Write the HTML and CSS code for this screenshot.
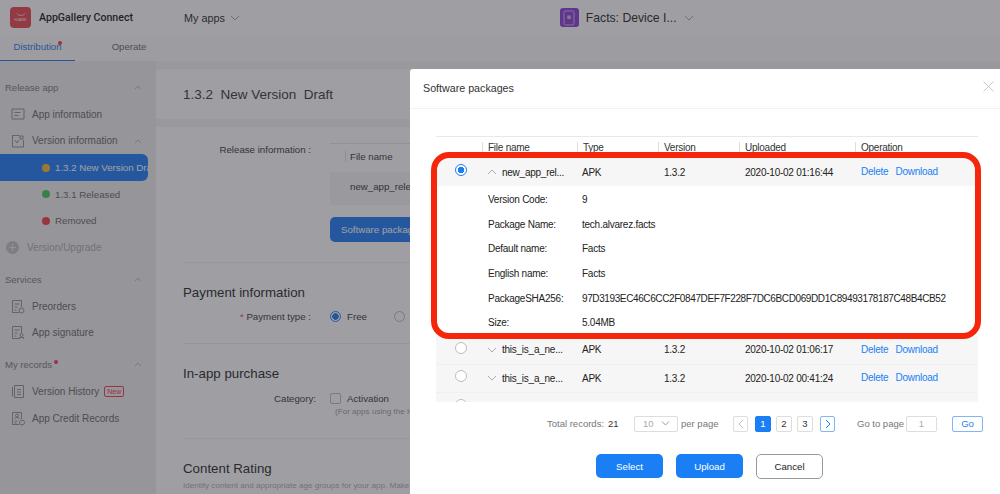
FILE: index.html
```html
<!DOCTYPE html>
<html lang="en">
<head>
    <meta charset="UTF-8">
    <meta name="viewport" content="width=device-width, initial-scale=1.0">
    <title>AppGallery Connect</title>
    <link rel="stylesheet" href="styles.css">
</head>
<body>
    <div class="page">
        <header class="topbar">
            <div class="logo">
                <svg width="14" height="5" viewBox="0 0 14 5"><path d="M3 0.5c1 2.5 7 2.5 8 0" fill="none" stroke="#fff" stroke-width="0.7"/></svg>
                <span class="logo-text">HUAWEI</span>
            </div>
            <span class="brand">AppGallery Connect</span>
            <span class="my-apps">My apps</span>
            <svg class="chev-top my-apps-chev" width="10" height="6" viewBox="0 0 10 6"><path d="M1 1l4 4 4-4"/></svg>
            <div class="app-icon">
                <svg width="12" height="16" viewBox="0 0 12 16"><rect x="1" y="1" width="10" height="14" rx="1.5" fill="none" stroke="#c9b6e6" stroke-width="1"/><rect x="4.2" y="5.5" width="3.6" height="3.6" fill="#c9b6e6"/></svg>
            </div>
            <span class="app-name">Facts: Device I...</span>
            <svg class="chev-top" width="10" height="6" viewBox="0 0 10 6"><path d="M1 1l4 4 4-4"/></svg>
        </header>

        <nav class="tabs">
            <a class="tab tab-active">Distribution<i class="dot"></i></a>
            <a class="tab">Operate</a>
        </nav>

        <div class="main">
            <aside class="sidebar">
                <div class="side-title">Release app <svg class="chev-side" width="8" height="5" viewBox="0 0 8 5"><path d="M1 4l3-3 3 3"/></svg></div>
                <div class="side-item">
                    <svg class="side-icon" width="14" height="14" viewBox="0 0 14 14"><path d="M1 2h12v10H1zM3.500 5.500h6M3.500 8.500h4"/></svg>
                    App information
                </div>
                <div class="side-item">
                    <svg class="side-icon" width="14" height="14" viewBox="0 0 14 14"><path d="M1.500 1.500h7M12.500 6v7h-11V1.500M4 6l2 3 2-3M9 2h3v3H9z"/></svg>
                    Version information
                    <svg class="chev-side" width="8" height="5" viewBox="0 0 8 5"><path d="M1 4l3-3 3 3"/></svg>
                </div>
                <div class="side-sub side-selected"><i class="status status-yellow"></i><span class="side-clip">1.3.2 New Version Draft</span></div>
                <div class="side-sub"><i class="status status-green"></i>1.3.1 Released</div>
                <div class="side-sub"><i class="status status-red"></i>Removed</div>
                <div class="side-item side-disabled">
                    <svg class="side-plus" width="13" height="13" viewBox="0 0 13 13"><circle cx="6.500" cy="6.500" r="6.500" fill="#bfbfc2"/><path d="M6.500 3v7M3 6.500h7" stroke="#e8e8e8" stroke-width="1"/></svg>
                    Version/Upgrade
                </div>

                <div class="side-title side-gap">Services <svg class="chev-side" width="8" height="5" viewBox="0 0 8 5"><path d="M1 4l3-3 3 3"/></svg></div>
                <div class="side-item">
                    <svg class="side-icon" width="14" height="15" viewBox="0 0 14 15"><path d="M8 13.500H1.500v-12h9V8M3.500 5h5M3.500 8h3M3.500 11h2"/><circle cx="10.500" cy="11.500" r="2.500"/></svg>
                    Preorders
                </div>
                <div class="side-item">
                    <svg class="side-icon" width="14" height="15" viewBox="0 0 14 15"><path d="M8 13.500H1.500v-12h9V8M3.500 5h5M3.500 8h3M3.500 11h2"/><circle cx="10.500" cy="10" r="1.500"/><path d="M8.500 14v-1.500h4V14"/></svg>
                    App signature
                </div>

                <div class="side-title side-gap">My records<i class="dot dot-side"></i> <svg class="chev-side" width="8" height="5" viewBox="0 0 8 5"><path d="M1 4l3-3 3 3"/></svg></div>
                <div class="side-item">
                    <svg class="side-icon" width="14" height="15" viewBox="0 0 14 15"><path d="M3.500 1.500h9v12h-9zM1.500 3v9.500M6 5.500h4M6 8h4M6 10.500h4"/></svg>
                    Version History
                    <span class="new-tag">New</span>
                </div>
                <div class="side-item">
                    <svg class="side-icon" width="14" height="15" viewBox="0 0 14 15"><path d="M8 13.500H1.500v-12h9V8M3.500 10h3M3.500 12h2"/><circle cx="6" cy="4.500" r="1.500"/><path d="M3.500 8c0-2 5-2 5 0"/><circle cx="11" cy="11.500" r="2.500"/></svg>
                    App Credit Records
                </div>
            </aside>

            <section class="content">
                <div class="version-bar">1.3.2&nbsp; New Version&nbsp; Draft</div>
                <div class="form">
                    <div class="release-row">
                        <div class="field-label">Release information :</div>
                        <div class="release-box">
                            <div class="release-head"><span>File name</span></div>
                            <div class="release-cell">new_app_release.apk</div>
                            <div class="btn-soft">Software package</div>
                        </div>
                    </div>
                    <div class="block">
                        <h2>Payment information</h2>
                        <div class="field">
                            <div class="field-label"><b class="req">*</b> Payment type :</div>
                            <i class="radio radio-on"></i><span class="field-val">Free</span>
                            <i class="radio radio-paid"></i>
                        </div>
                    </div>
                    <div class="block block-iap">
                        <h2>In-app purchase</h2>
                        <div class="field field-iap">
                            <div class="field-label">Category:</div>
                            <i class="checkbox"></i><span class="field-val">Activation</span>
                        </div>
                        <p class="hint">(For apps using the HUAWEI IAP service)</p>
                    </div>
                    <div class="block block-rating">
                        <h2>Content Rating</h2>
                        <p class="note">Identify content and appropriate age groups for your app. Make sure the rating is accurate.</p>
                    </div>
                </div>
            </section>
        </div>

        <div class="mask"></div>

        <div class="modal">
            <div class="modal-head">
                Software packages
                <svg class="modal-close" width="11" height="11" viewBox="0 0 11 11"><path d="M0.500 0.500l10 10M10.500 0.500l-10 10" stroke="#c8c8c8" stroke-width="1"/></svg>
            </div>

            <div class="pkg-wrap">
                <div class="pkg-row pkg-head">
                    <span></span><span>File name</span><span>Type</span><span>Version</span><span>Uploaded</span><span>Operation</span>
                </div>
                <div class="pkg-row pkg-item pkg-first">
                    <span class="cell-radio"><i class="radio-sm radio-sm-on"></i></span>
                    <span class="cell-name"><svg class="chev-row" width="10" height="6" viewBox="0 0 10 6"><path d="M1 5l4-4 4 4"/></svg>new_app_rel...</span>
                    <span>APK</span><span>1.3.2</span><span>2020-10-02 01:16:44</span>
                    <span class="ops"><a>Delete</a><a>Download</a></span>
                </div>
                <div class="detail-list">
                    <div class="detail"><span>Version Code:</span><span>9</span></div>
                    <div class="detail"><span>Package Name:</span><span>tech.alvarez.facts</span></div>
                    <div class="detail"><span>Default name:</span><span>Facts</span></div>
                    <div class="detail"><span>English name:</span><span>Facts</span></div>
                    <div class="detail"><span>PackageSHA256:</span><span class="sha">97D3193EC46C6CC2F0847DEF7F228F7DC6BCD069DD1C89493178187C48B4CB52</span></div>
                    <div class="detail"><span>Size:</span><span>5.04MB</span></div>
                </div>
                <div class="pkg-row pkg-item">
                    <span class="cell-radio"><i class="radio-sm"></i></span>
                    <span class="cell-name"><svg class="chev-row" width="10" height="6" viewBox="0 0 10 6"><path d="M1 1l4 4 4-4"/></svg>this_is_a_ne...</span>
                    <span>APK</span><span>1.3.2</span><span>2020-10-02 01:06:17</span>
                    <span class="ops"><a>Delete</a><a>Download</a></span>
                </div>
                <div class="pkg-row pkg-item">
                    <span class="cell-radio"><i class="radio-sm"></i></span>
                    <span class="cell-name"><svg class="chev-row" width="10" height="6" viewBox="0 0 10 6"><path d="M1 1l4 4 4-4"/></svg>this_is_a_ne...</span>
                    <span>APK</span><span>1.3.2</span><span>2020-10-02 00:41:24</span>
                    <span class="ops"><a>Delete</a><a>Download</a></span>
                </div>
                <div class="pkg-row pkg-item">
                    <span class="cell-radio"><i class="radio-sm"></i></span>
                </div>
            </div>

            <div class="pager">
                <span class="pager-label total-label">Total records:</span>
                <span class="pager-total">21</span>
                <div class="page-size">10
                    <svg width="9" height="5" viewBox="0 0 9 5"><path d="M1 0.500l3.500 3.500 3.500-3.500" fill="none" stroke="#9a9a9a"/></svg>
                </div>
                <span class="pager-label per-page">per page</span>
                <div class="page-arrow arrow-prev"><svg width="6" height="10" viewBox="0 0 6 10"><path d="M5 1L1 5l4 4" fill="none" stroke="#c4c4c4"/></svg></div>
                <div class="page-num page-on">1</div>
                <div class="page-num">2</div>
                <div class="page-num">3</div>
                <div class="page-arrow arrow-next"><svg width="6" height="10" viewBox="0 0 6 10"><path d="M1 1l4 4-4 4" fill="none" stroke="#1a7ff5"/></svg></div>
                <span class="pager-label goto">Go to page</span>
                <div class="goto-input">1</div>
                <div class="goto-btn">Go</div>
            </div>

            <div class="modal-foot">
                <button class="btn btn-primary">Select</button>
                <button class="btn btn-primary">Upload</button>
                <button class="btn btn-cancel">Cancel</button>
            </div>

            <div class="red-frame"></div>
        </div>
    </div>
</body>
</html>
```

FILE: styles.css
```css
* {
    box-sizing: border-box;
}
body {
    margin: 0;
    font-family: "Liberation Sans", Arial, sans-serif;
    color: #222;
}
.page {
    position: relative;
    width: 1000px;
    height: 494px;
    overflow: hidden;
    background: #f2f2f4;
    display: flex;
    flex-direction: column;
}

/* top bar */
.topbar {
    height: 35px;
    flex: none;
    background: #fff;
    display: flex;
    align-items: center;
    padding-left: 10px;
}
.logo {
    width: 21px;
    height: 21px;
    border-radius: 4px;
    background: #e8414d;
    display: flex;
    flex-direction: column;
    align-items: center;
    justify-content: center;
}
.logo svg {
    display: block;
}
.logo-text {
    font-size: 3px;
    line-height: 4px;
    color: #fff;
}
.brand {
    margin-left: 8px;
    width: 145px;
    font-size: 10.600px;
    color: #111;
    font-family: Roboto, "Liberation Sans", sans-serif;
    font-weight: 500;
}
.my-apps {
    font-size: 10.800px;
    color: #222;
}
.chev-top {
    fill: none;
    stroke: #aaa;
    margin-left: 5px;
}
.my-apps-chev {
    margin-right: 320px;
}
.app-icon {
    width: 19px;
    height: 19px;
    border-radius: 3px;
    background: #8638d8;
    display: flex;
    align-items: center;
    justify-content: center;
}
.app-name {
    margin-left: 7px;
    width: 93px;
    font-size: 12.200px;
    color: #222;
}

/* tabs */
.tabs {
    height: 26px;
    flex: none;
    background: #fbfbfb;
    display: flex;
}
.tab {
    position: relative;
    width: 75px;
    height: 26px;
    padding-top: 6px;
    font-size: 9.600px;
    text-align: center;
    color: #666;
}
.tab + .tab {
    margin-left: 10px;
    padding-left: 13px;
}
.tab-active {
    color: #1a73e8;
    border-bottom: 1px solid #1a73e8;
}
.dot {
    position: absolute;
    top: 6px;
    right: 13px;
    width: 4px;
    height: 4px;
    border-radius: 50%;
    background: #f0304a;
}

/* sidebar */
.main {
    flex: 1;
    display: flex;
    min-height: 0;
}
.sidebar {
    width: 156px;
    flex: none;
    padding-top: 13.300px;
    background: #ececef;
    font-size: 10px;
    color: #666;
}
.side-title,
.side-item,
.side-sub {
    position: relative;
    height: 26.670px;
    display: flex;
    align-items: center;
}
.side-title {
    padding-left: 5px;
    font-size: 9.500px;
    color: #777;
}
.side-gap {
    margin-top: 5.300px;
}
.side-item {
    padding-left: 32px;
}
.side-icon {
    position: absolute;
    left: 11px;
    fill: none;
    stroke: #777;
    stroke-width: 0.800;
}
.side-plus {
    position: absolute;
    left: 6px;
}
.chev-side {
    position: absolute;
    left: 134px;
    top: 11px;
    fill: none;
    stroke: #bbb;
}
.side-sub {
    padding-left: 55px;
    width: 148px;
    font-size: 9.700px;
}
.side-selected {
    background: #1a78f5;
    color: #fff;
    border-radius: 0 6px 6px 0;
    overflow: hidden;
    white-space: nowrap;
}
.side-clip {
    flex: none;
}
.status {
    position: absolute;
    left: 42px;
    top: 9.500px;
    width: 8px;
    height: 8px;
    border-radius: 50%;
}
.status-yellow {
    background: #f5b82e;
}
.status-green {
    background: #3cc95a;
}
.status-red {
    background: #f0384a;
}
.side-disabled {
    padding-left: 27px;
    color: #aaa;
}
.dot-side {
    position: static;
    margin: -6px 0 0 2px;
}
.new-tag {
    margin-left: 5px;
    height: 11px;
    width: 20px;
    border: 1px solid #f0384a;
    border-radius: 2px;
    font-size: 7px;
    line-height: 9px;
    text-align: center;
    color: #f0384a;
}

/* page content behind the dialog */
.content {
    flex: 1;
    min-width: 0;
    overflow: hidden;
}
.version-bar {
    height: 50px;
    margin-top: 8px;
    padding: 0 27px;
    background: #fff;
    font-size: 13.500px;
    line-height: 52px;
    color: #333;
    border-radius: 4px 0 0 0;
    white-space: nowrap;
}
.form {
    margin-top: 8px;
    height: 400px;
    background: #fff;
    padding: 0 27px;
}
.release-row {
    display: flex;
    height: 136px;
    padding-top: 17px;
    border-bottom: 1px solid #eee;
    width: 600px;
}
.field-label {
    width: 128px;
    margin-right: 19px;
    flex: none;
    text-align: right;
    font-size: 9.700px;
    color: #333;
}
.release-box {
    width: 300px;
    margin-top: -1px;
}
.release-head {
    height: 29px;
    border-top: 1px solid #e6e6e6;
    padding: 7px 0 0 15px;
    font-size: 9.700px;
    color: #333;
}
.release-head span {
    border-left: 1px solid #ddd;
    padding-left: 4px;
}
.release-cell {
    height: 33px;
    padding: 8px 20px;
    background: #f5f5f5;
    font-size: 9.700px;
    line-height: 14px;
    color: #333;
}
.btn-soft {
    margin-top: 12px;
    height: 25px;
    width: 120px;
    padding-left: 11px;
    border-radius: 5px;
    background: #1a78f5;
    color: #fff;
    font-size: 9.700px;
    line-height: 25px;
}
.block {
    width: 600px;
    border-bottom: 1px solid #eee;
    height: 81px;
    padding-top: 21px;
}
.block-iap {
    height: 95px;
}
.block-rating {
    border-bottom: 0;
}
.block h2 {
    margin: 0;
    font-size: 13.300px;
    line-height: 17px;
    font-weight: normal;
    color: #222;
}
.field {
    margin-top: 7px;
    height: 16px;
    display: flex;
    align-items: center;
    font-size: 9.700px;
    color: #333;
}
.field-iap {
    margin-top: 8px;
}
.field-iap .field-label {
    width: 133px;
    margin-right: 14px;
}
.req {
    color: #f0384a;
    font-weight: normal;
}
.field-val {
    margin-left: 6px;
}
.radio {
    width: 11px;
    height: 11px;
    border-radius: 50%;
    border: 1px solid #bbb;
    flex: none;
}
.radio-on {
    border: 1px solid #1a78f5;
    background: radial-gradient(circle, #1a78f5 0 3px, #fff 3.500px);
}
.radio-paid {
    margin-left: 27px;
}
.checkbox {
    width: 11px;
    height: 11px;
    border: 1px solid #bbb;
    border-radius: 2px;
    flex: none;
}
.hint {
    margin: 1px 0 0 152px;
    font-size: 8.100px;
    color: #999;
    white-space: nowrap;
}
.note {
    margin: 4px 0 0;
    font-size: 8.100px;
    color: #aaa;
    white-space: nowrap;
}

/* dim layer and dialog */
.mask {
    position: absolute;
    inset: 0;
    background: rgba(50, 52, 60, 0.47);
}
.modal {
    position: absolute;
    left: 410px;
    top: 69px;
    width: 590px;
    height: 425px;
    background: #fff;
    border-radius: 3px 0 0 0;
}
.modal-head {
    position: relative;
    height: 40px;
    padding-left: 13px;
    border-bottom: 1px solid #f2f2f2;
    font-size: 10.700px;
    line-height: 39px;
    color: #333;
}
.modal-close {
    position: absolute;
    right: 6px;
    top: 12px;
}
.pkg-wrap {
    margin: 27px 0 0 26px;
    width: 542px;
    height: 266px;
    overflow: hidden;
    border-top: 1px solid #e8e8e8;
    font-size: 10px;
    letter-spacing: -0.25px;
}
.pkg-row {
    display: grid;
    grid-template-columns: 46px 95px 81px 81px 116px 123px;
    align-items: center;
}
.pkg-row > span {
    padding-left: 5px;
    white-space: nowrap;
}
.pkg-item > span:nth-child(n+4) {
    padding-left: 6px;
}
.pkg-head {
    height: 21px;
    color: #333;
}
.pkg-head > span + span {
    border-left: 1px solid #ddd;
    line-height: 12px;
}
.pkg-item {
    height: 28.500px;
    background: #f6f6f6;
    border-bottom: 1px solid #f0f0f0;
    color: #222;
}
.pkg-first {
    height: 28px;
    border-bottom: 0;
}
.pkg-row > .cell-radio {
    padding: 0 0 4px 19px;
    display: flex;
}
.cell-name {
    display: flex;
    align-items: center;
}
.chev-row {
    margin-right: 5px;
    flex: none;
    fill: none;
    stroke: #aaa;
}
.ops {
    display: flex;
    gap: 7px;
    color: #1a7ff5;
    margin-bottom: 1px;
}
.radio-sm {
    width: 12px;
    height: 12px;
    border-radius: 50%;
    border: 1px solid #bdbdbd;
    background: #fff;
}
.radio-sm-on {
    border-color: #1a7ff5;
    background: radial-gradient(circle, #1a7ff5 0 3px, #fff 3.500px);
}
.detail-list {
    padding-top: 1px;
    height: 150px;
}
.detail {
    display: flex;
    height: 24.700px;
    align-items: center;
    white-space: nowrap;
    color: #222;
}
.detail span:first-child {
    width: 146px;
    padding-left: 52px;
    flex: none;
}
.detail .sha {
    letter-spacing: -0.39px;
}
.pager {
    margin-top: 14px;
    height: 15px;
    display: flex;
    align-items: center;
    font-size: 9.500px;
    padding-left: 137px;
}
.pager-label {
    color: #777;
}
.total-label {
    width: 61px;
    white-space: nowrap;
}
.pager-total {
    width: 26px;
    color: #333;
}
.page-size {
    width: 44px;
    height: 16px;
    border: 1px solid #ddd;
    border-radius: 2px;
    padding-left: 8px;
    display: flex;
    align-items: center;
    justify-content: space-between;
    padding-right: 7px;
    color: #aaa;
}
.per-page {
    margin-left: 3px;
    width: 52px;
}
.page-arrow,
.page-num {
    height: 16px;
    border: 1px solid #ddd;
    border-radius: 2px;
    display: flex;
    align-items: center;
    justify-content: center;
}
.page-arrow {
    width: 15px;
}
.arrow-next {
    border-color: #7fb6f7;
    margin-left: 7px;
}
.page-num {
    width: 16px;
    margin-left: 5px;
    color: #333;
}
.arrow-prev + .page-num {
    margin-left: 7px;
}
.page-on {
    background: #1a7ff5;
    border-color: #1a7ff5;
    color: #fff;
}
.goto {
    margin-left: 22px;
    width: 49px;
    white-space: nowrap;
}
.goto-input {
    width: 31px;
    height: 16px;
    border: 1px solid #ddd;
    border-radius: 2px;
    text-align: center;
    line-height: 14px;
    color: #aaa;
}
.goto-btn {
    margin-left: 15px;
    width: 31px;
    height: 16px;
    border: 1px solid #7fb6f7;
    border-radius: 2px;
    text-align: center;
    line-height: 14px;
    color: #1a7ff5;
}
.modal-foot {
    margin-top: 23px;
    display: flex;
    gap: 13px;
    padding-left: 186px;
}
.btn {
    width: 67px;
    height: 24px;
    border-radius: 5px;
    font-family: inherit;
    font-size: 9.700px;
    padding: 0;
}
.btn-primary {
    border: 0;
    background: #1a7ff5;
    color: #fff;
}
.btn-cancel {
    height: 25px;
    border: 1px solid #999;
    background: #fff;
    color: #222;
}
.red-frame {
    position: absolute;
    left: 21px;
    top: 83px;
    width: 550px;
    height: 187px;
    border: 6px solid #f5260a;
    border-radius: 18px;
}
```
